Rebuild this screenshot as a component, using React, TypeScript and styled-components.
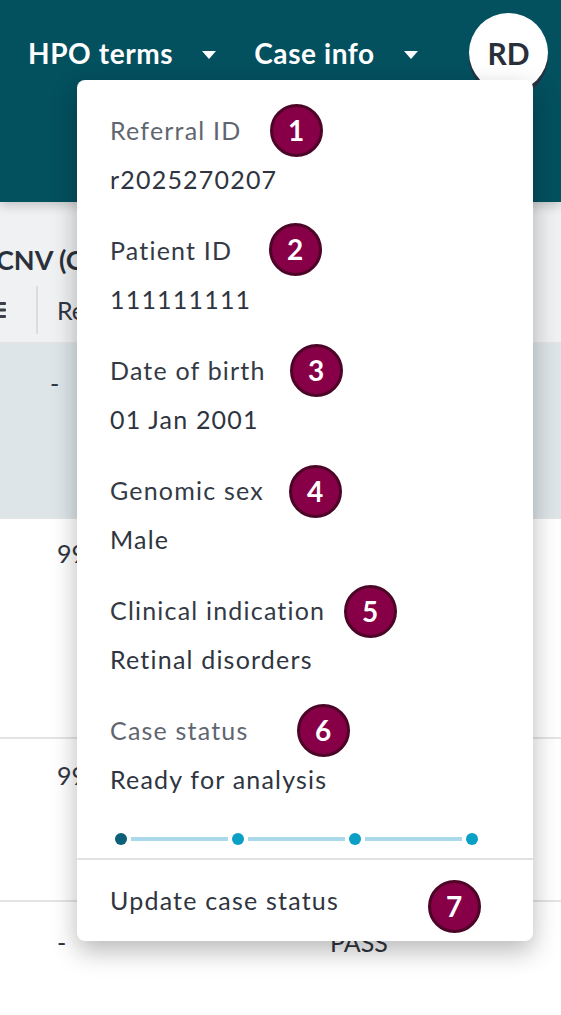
import React from 'react';
import styled, { createGlobalStyle } from 'styled-components';

const GlobalStyle = createGlobalStyle`
  html, body {
    margin: 0;
    padding: 0;
    background: #ffffff;
    font-family: Lato, "Open Sans", "Liberation Sans", sans-serif;
  }
  * { box-sizing: border-box; }
`;

const Page = styled.div`
  position: relative;
  width: 561px;
  height: 1015px;
  overflow: hidden;
  background: #ffffff;
`;

const Header = styled.header`
  height: 202px;
  background: #03505f;
  display: flex;
  align-items: flex-start;
  padding: 13px 13px 0 28px;
  position: relative;
  z-index: 2;
  box-shadow: 0 4px 10px rgba(0, 0, 0, 0.18);
`;

const NavItem = styled.div`
  display: flex;
  align-items: center;
  height: 79px;
  margin-right: 38px;
  color: #ffffff;
  font-size: 28px;
  font-weight: 700;
  letter-spacing: 0.6px;
`;

const Caret = styled.span`
  width: 0;
  height: 0;
  margin-left: 29px;
  margin-top: 4px;
  border-left: 7px solid transparent;
  border-right: 7px solid transparent;
  border-top: 8px solid #ffffff;
`;

const Avatar = styled.div`
  margin-left: auto;
  width: 79px;
  height: 79px;
  border-radius: 50%;
  background: #ffffff;
  display: flex;
  align-items: center;
  justify-content: center;
  color: #2a2f3a;
  font-size: 30px;
  font-weight: 700;
  box-shadow: 0 5px 0 #263140;
`;

const Section = styled.div`
  height: 140px;
  background: #eff1f2;
  padding-top: 38px;
`;

const Title = styled.div`
  margin-left: -4px;
  color: #2b313b;
  font-size: 27px;
  font-weight: 700;
  line-height: 40px;
  white-space: nowrap;
`;

const ColumnHead = styled.div`
  display: flex;
  align-items: center;
  height: 48px;
  margin-top: 6px;
`;

const HandleIcon = styled.svg`
  margin-left: -10px;
  flex: none;
`;

const ColumnDivider = styled.span`
  width: 2px;
  height: 48px;
  margin-left: 30px;
  background: #d9dde0;
`;

const ColumnLabel = styled.span`
  margin-left: 19px;
  color: #2f3540;
  font-size: 25px;
`;

const Row = styled.div<{ $height: number; $selected?: boolean; $pad: number }>`
  display: flex;
  height: ${p => p.$height}px;
  padding-top: ${p => p.$pad}px;
  background: ${p => (p.$selected ? '#dde5e8' : '#ffffff')};
  border-top: 2px solid #e2e4e6;
  color: #2f3540;
  font-size: 25px;
  line-height: 28px;
`;

const Cell = styled.span<{ $left: number }>`
  position: relative;
  left: ${p => p.$left}px;
  width: 0;
  white-space: nowrap;
`;

const Menu = styled.div`
  position: absolute;
  left: 77px;
  top: 80px;
  width: 456px;
  height: 861px;
  background: #ffffff;
  border-radius: 8px;
  box-shadow: 0 10px 26px rgba(0, 0, 0, 0.28);
  z-index: 5;
  display: flex;
  flex-direction: column;
`;

const Fields = styled.div`
  padding: 26px 33px 0;
  display: flex;
  flex-direction: column;
  gap: 22px;
`;

const Field = styled.div`
  display: flex;
  flex-direction: column;
`;

const Label = styled.div<{ $muted?: boolean }>`
  color: ${p => (p.$muted ? '#5f6670' : '#333a45')};
  font-size: 25px;
  line-height: 49px;
  letter-spacing: 1.2px;
`;

const Value = styled.div`
  color: #2f3540;
  font-size: 25px;
  line-height: 49px;
  letter-spacing: 1.2px;
`;

const Stepper = styled.div`
  display: flex;
  align-items: center;
  width: 363px;
  margin: 29px 0 13px 38px;
`;

const Dot = styled.span<{ $current?: boolean }>`
  flex: none;
  width: 12px;
  height: 12px;
  border-radius: 50%;
  background: ${p => (p.$current ? '#0b5f78' : '#0aa0c6')};
`;

const Track = styled.span`
  flex: 1;
  height: 4px;
  margin: 0 4px;
  background: #a9d9ea;
`;

const Footer = styled.div`
  border-top: 2px solid #e2e2e2;
  flex: 1;
  display: flex;
  align-items: center;
  padding: 0 33px 2px;
  color: #2f3540;
  font-size: 25px;
  letter-spacing: 1.2px;
`;

const Badge = styled.span<{ $x: number; $y: number }>`
  position: absolute;
  left: ${p => p.$x - 77 - 26.5}px;
  top: ${p => p.$y - 80 - 26.5}px;
  width: 53px;
  height: 53px;
  border-radius: 50%;
  background: #870047;
  border: 3px solid #4c0427;
  color: #ffffff;
  font-size: 28px;
  font-weight: 700;
  display: flex;
  align-items: center;
  justify-content: center;
`;

const fields = [
  { label: 'Referral ID', value: 'r2025270207', muted: true },
  { label: 'Patient ID', value: '111111111' },
  { label: 'Date of birth', value: '01 Jan 2001' },
  { label: 'Genomic sex', value: 'Male' },
  { label: 'Clinical indication', value: 'Retinal disorders' },
  { label: 'Case status', value: 'Ready for analysis', muted: true },
];

const badges = [
  { n: 1, x: 296, y: 130 },
  { n: 2, x: 295, y: 249 },
  { n: 3, x: 316, y: 370 },
  { n: 4, x: 315, y: 491 },
  { n: 5, x: 370, y: 611 },
  { n: 6, x: 323, y: 730 },
  { n: 7, x: 454, y: 906 },
];

export default function App() {
  return (
    <Page>
      <GlobalStyle />
      <Header>
        <NavItem>
          HPO terms
          <Caret />
        </NavItem>
        <NavItem>
          Case info
          <Caret />
        </NavItem>
        <Avatar>RD</Avatar>
      </Header>

      <Section>
        <Title>CNV (CNV calls)</Title>
        <ColumnHead>
          <HandleIcon width="16" height="20" viewBox="0 0 16 20">
            <rect x="0" y="2" width="16" height="3" rx="1" fill="#3a404a" />
            <rect x="0" y="8.5" width="16" height="3" rx="1" fill="#3a404a" />
            <rect x="0" y="15" width="16" height="3" rx="1" fill="#3a404a" />
          </HandleIcon>
          <ColumnDivider />
          <ColumnLabel>Region</ColumnLabel>
        </ColumnHead>
      </Section>

      <Row $height={175} $pad={25} $selected>
        <Cell $left={50}>-</Cell>
      </Row>
      <Row $height={220} $pad={20}>
        <Cell $left={57}>99</Cell>
      </Row>
      <Row $height={163} $pad={22}>
        <Cell $left={57}>99</Cell>
      </Row>
      <Row $height={120} $pad={26}>
        <Cell $left={57}>-</Cell>
        <Cell $left={330}>PASS</Cell>
      </Row>

      <Menu>
        <Fields>
          {fields.map(f => (
            <Field key={f.label}>
              <Label $muted={f.muted}>{f.label}</Label>
              <Value>{f.value}</Value>
            </Field>
          ))}
        </Fields>
        <Stepper>
          <Dot $current />
          <Track />
          <Dot />
          <Track />
          <Dot />
          <Track />
          <Dot />
        </Stepper>
        <Footer>Update case status</Footer>
        {badges.map(b => (
          <Badge key={b.n} $x={b.x} $y={b.y}>
            {b.n}
          </Badge>
        ))}
      </Menu>
    </Page>
  );
}
